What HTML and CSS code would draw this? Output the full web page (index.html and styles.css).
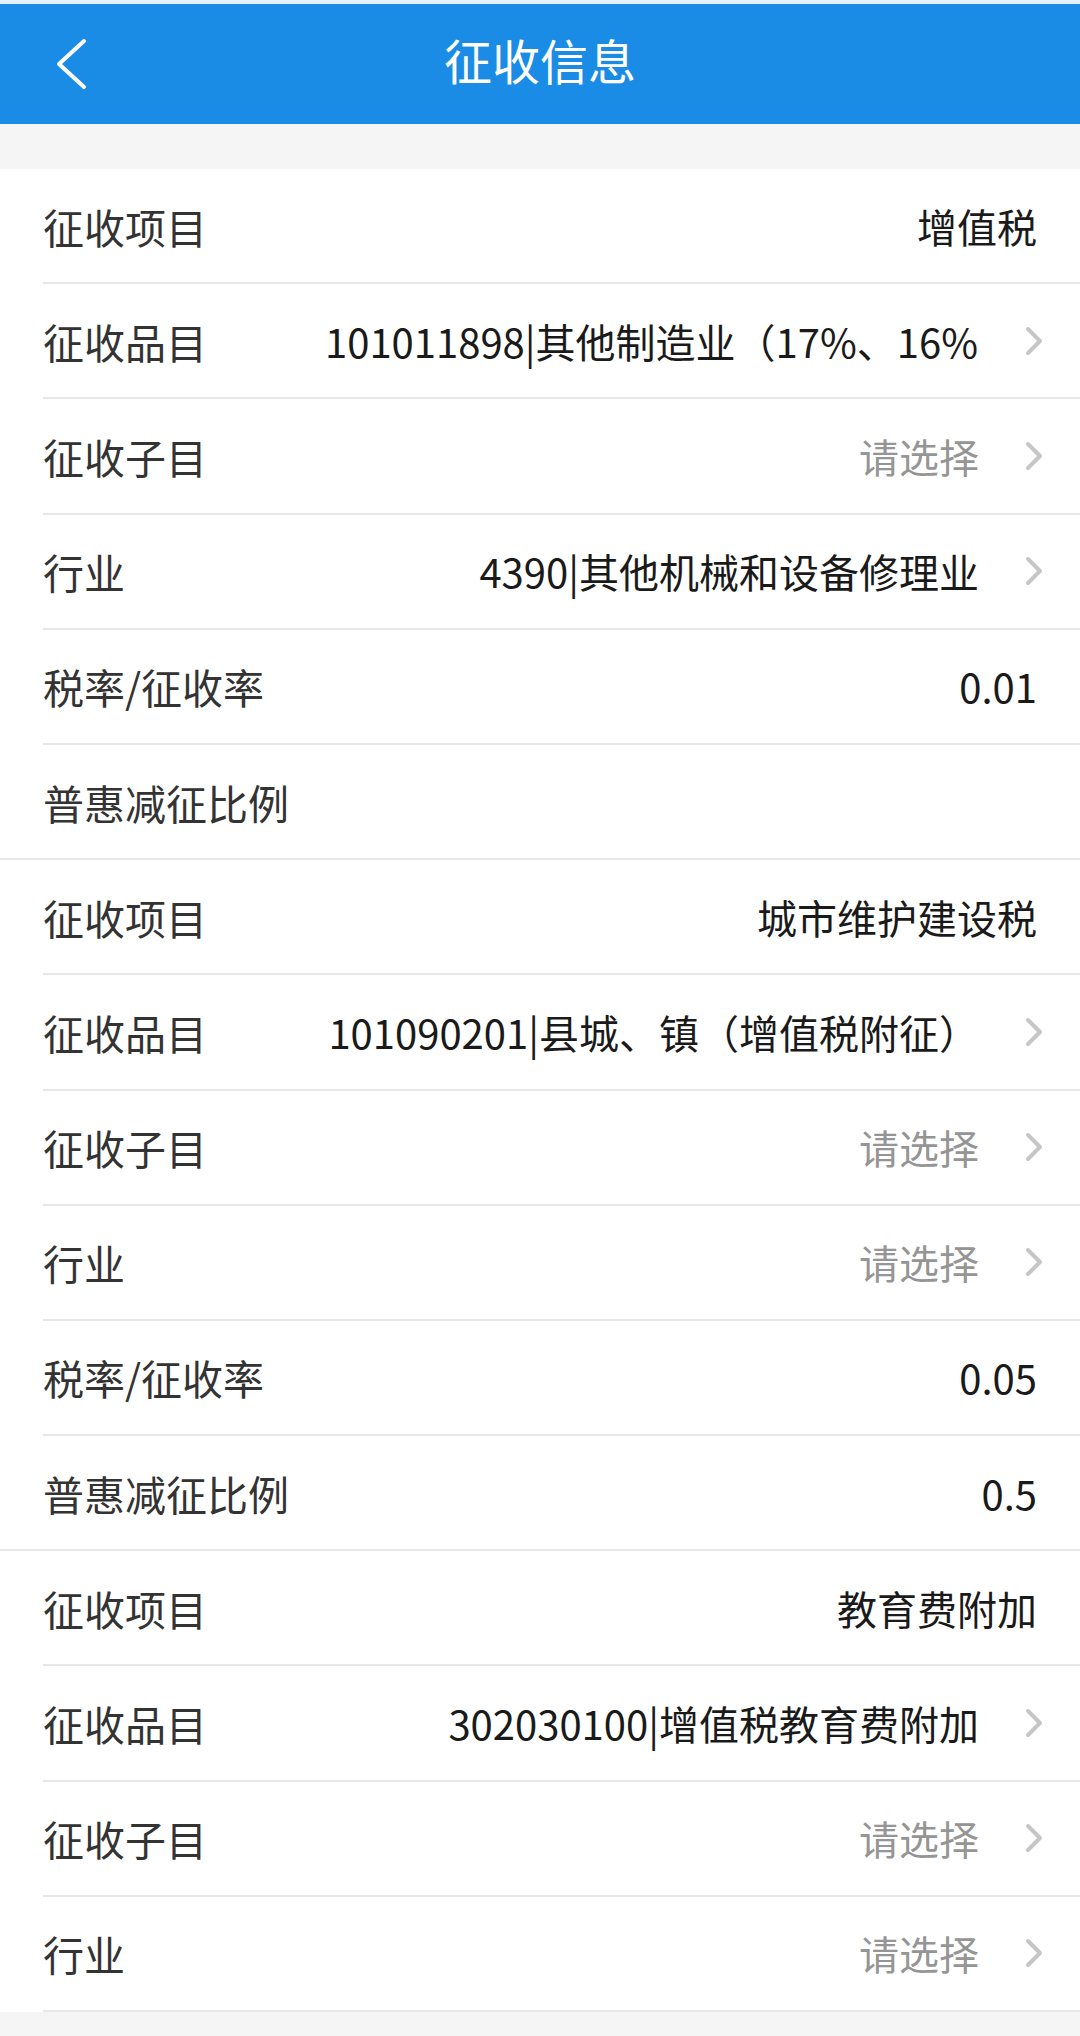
FILE: index.html
```html
<!DOCTYPE html>
<html lang="zh-CN">
<head>
    <meta charset="UTF-8">
    <meta name="viewport" content="width=device-width, initial-scale=1.0">
    <title>征收信息</title>
    <link rel="stylesheet" href="styles.css">
</head>
<body>
    <header class="top-bar">
        <div class="back-btn">
            <svg width="34" height="52" viewBox="0 0 34 52">
                <polyline points="30,3 5,26 30,49" fill="none" stroke="#ffffff" stroke-width="4" stroke-linecap="round" stroke-linejoin="round"/>
            </svg>
        </div>
        <h1>征收信息</h1>
        <div></div>
    </header>

    <div class="list">
        <div class="group">
            <div class="row">
                <span class="label">征收项目</span>
                <span class="value">增值税</span>
            </div>
            <div class="row">
                <span class="label">征收品目</span>
                <span class="value">101011898|其他制造业（17%、16%、13%）</span>
                <svg class="arrow" viewBox="0 0 18 30"><polyline points="3,3 15,15 3,27"/></svg>
            </div>
            <div class="row">
                <span class="label">征收子目</span>
                <span class="value placeholder">请选择</span>
                <svg class="arrow" viewBox="0 0 18 30"><polyline points="3,3 15,15 3,27"/></svg>
            </div>
            <div class="row">
                <span class="label">行业</span>
                <span class="value">4390|其他机械和设备修理业</span>
                <svg class="arrow" viewBox="0 0 18 30"><polyline points="3,3 15,15 3,27"/></svg>
            </div>
            <div class="row">
                <span class="label">税率/征收率</span>
                <span class="value">0.01</span>
            </div>
            <div class="row last">
                <span class="label">普惠减征比例</span>
                <span class="value"></span>
            </div>
        </div>

        <div class="group">
            <div class="row">
                <span class="label">征收项目</span>
                <span class="value">城市维护建设税</span>
            </div>
            <div class="row">
                <span class="label">征收品目</span>
                <span class="value">101090201|县城、镇（增值税附征）</span>
                <svg class="arrow" viewBox="0 0 18 30"><polyline points="3,3 15,15 3,27"/></svg>
            </div>
            <div class="row">
                <span class="label">征收子目</span>
                <span class="value placeholder">请选择</span>
                <svg class="arrow" viewBox="0 0 18 30"><polyline points="3,3 15,15 3,27"/></svg>
            </div>
            <div class="row">
                <span class="label">行业</span>
                <span class="value placeholder">请选择</span>
                <svg class="arrow" viewBox="0 0 18 30"><polyline points="3,3 15,15 3,27"/></svg>
            </div>
            <div class="row">
                <span class="label">税率/征收率</span>
                <span class="value">0.05</span>
            </div>
            <div class="row last">
                <span class="label">普惠减征比例</span>
                <span class="value">0.5</span>
            </div>
        </div>

        <div class="group">
            <div class="row">
                <span class="label">征收项目</span>
                <span class="value">教育费附加</span>
            </div>
            <div class="row">
                <span class="label">征收品目</span>
                <span class="value">302030100|增值税教育费附加</span>
                <svg class="arrow" viewBox="0 0 18 30"><polyline points="3,3 15,15 3,27"/></svg>
            </div>
            <div class="row">
                <span class="label">征收子目</span>
                <span class="value placeholder">请选择</span>
                <svg class="arrow" viewBox="0 0 18 30"><polyline points="3,3 15,15 3,27"/></svg>
            </div>
            <div class="row">
                <span class="label">行业</span>
                <span class="value placeholder">请选择</span>
                <svg class="arrow" viewBox="0 0 18 30"><polyline points="3,3 15,15 3,27"/></svg>
            </div>
        </div>
    </div>
</body>
</html>
```

FILE: styles.css
```css
body {
    margin: 0;
    background-color: #f5f5f5;
    font-family: "Noto Sans CJK SC", "Noto Sans", sans-serif;
}
.top-bar {
    display: grid;
    grid-template-columns: 1fr auto 1fr;
    align-items: center;
    height: 120px;
    border-top: 4px solid #e4f2fb;
    background-color: #1a8ce6;
}
.top-bar h1 {
    margin: 0;
    color: #ffffff;
    font-size: 48px;
    font-weight: 400;
    line-height: 1;
    padding-bottom: 10px;
}
.back-btn {
    display: flex;
    align-items: center;
    padding-left: 54px;
}
.list {
    margin-top: 45px;
}
.group {
    background-color: #ffffff;
}
.row {
    display: flex;
    align-items: center;
    box-sizing: border-box;
    height: 115.2px;
    margin-left: 43px;
    padding-right: 43px;
    border-bottom: 2px solid #e6e7e7;
    font-size: 41px;
}
.row.last {
    margin-left: 0;
    padding-left: 43px;
}
.label {
    flex: 0 0 282px;
    color: #333333;
    white-space: nowrap;
}
.value {
    flex: 1;
    min-width: 0;
    overflow: hidden;
    white-space: nowrap;
    text-align: right;
    font-size: 40px;
    color: #1a1a1a;
}
.value.placeholder {
    color: #959595;
}
.arrow {
    flex: 0 0 18px;
    width: 18px;
    height: 30px;
    margin-left: 46px;
    margin-right: -6px;
}
.arrow polyline {
    fill: none;
    stroke: #c6c6c6;
    stroke-width: 4;
    stroke-linecap: round;
    stroke-linejoin: round;
}
```
